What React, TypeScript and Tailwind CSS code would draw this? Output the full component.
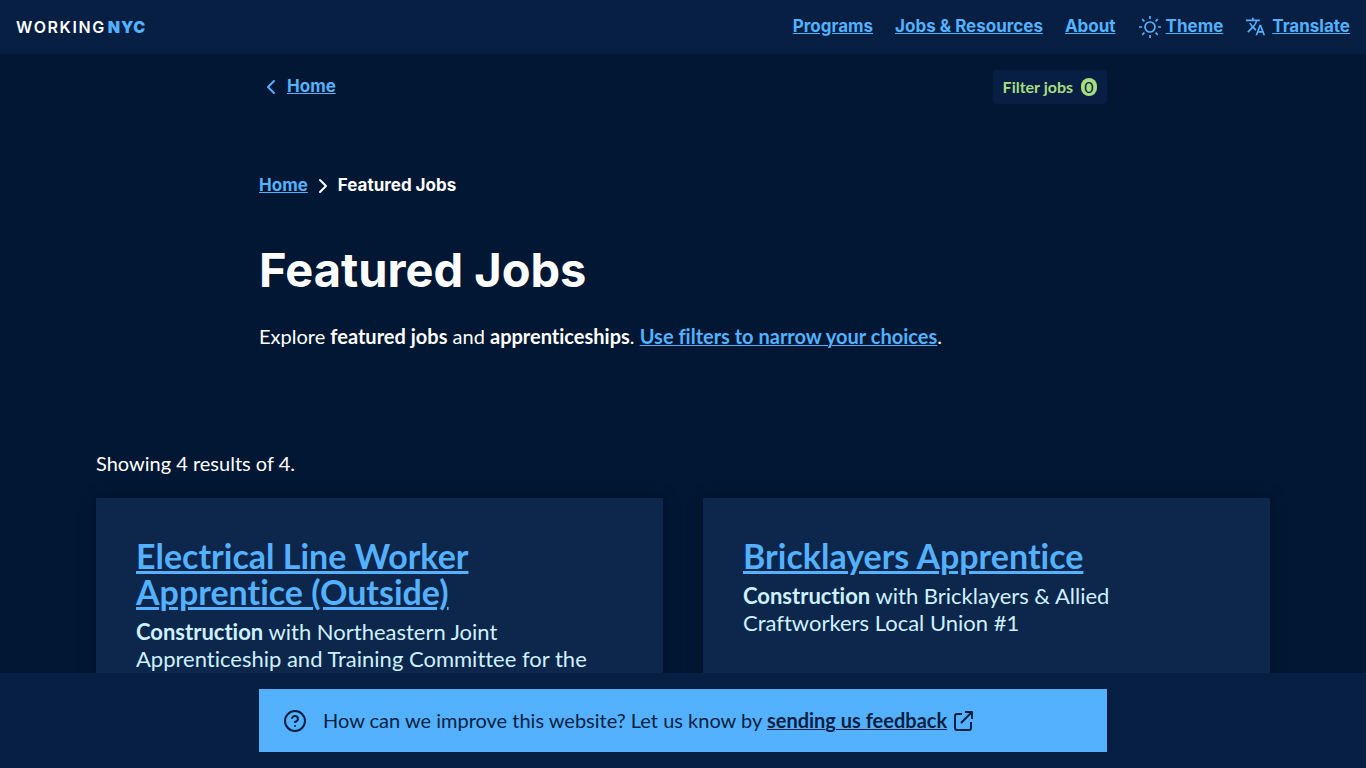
import React from "react";
import { ChevronLeft, ChevronRight, CircleHelp } from "lucide-react";
import { MdTranslate } from "react-icons/md";

const navLinks = ["Programs", "Jobs & Resources", "About"];

const jobs = [
  {
    title: "Electrical Line Worker Apprentice (Outside)",
    sector: "Construction",
    provider: "Northeastern Joint Apprenticeship and Training Committee for the",
  },
  {
    title: "Bricklayers Apprentice",
    sector: "Construction",
    provider: "Bricklayers & Allied Craftworkers Local Union #1",
  },
];

const SunIcon = () => (
  <svg
    className="size-6"
    viewBox="0 0 24 24"
    fill="none"
    stroke="currentColor"
    strokeWidth="1.7"
    aria-hidden="true"
  >
    <circle cx="12" cy="12" r="5" />
    <path d="M12 1v3M12 20v3M4.2 4.2l2.2 2.2M17.6 17.6l2.2 2.2M1 12h3M20 12h3M4.2 19.8l2.2-2.2M17.6 6.4l2.2-2.2" />
  </svg>
);

const ExternalIcon = () => (
  <svg
    className="-mt-1 ml-1 inline size-6"
    viewBox="0 0 24 24"
    fill="none"
    stroke="currentColor"
    strokeWidth="2"
    strokeLinejoin="round"
    aria-hidden="true"
  >
    <path d="M11 5H6a2 2 0 0 0-2 2v12a2 2 0 0 0 2 2h12a2 2 0 0 0 2-2v-6" />
    <path d="M14 3h7v7M21 3L10 14" />
  </svg>
);

const Header = () => (
  <header className="flex h-[54px] items-center justify-between bg-[#061f43] px-4 font-['Inter',sans-serif]">
    <a
      href="#"
      className="flex gap-[2px] text-base font-semibold tracking-widest text-white"
    >
      WORKING{" "}
      <span className="font-black tracking-wider text-[#53b1fd]">NYC</span>
    </a>
    <nav className="flex items-center gap-[22px] text-[17px] font-bold text-[#53b1fd]">
      {navLinks.map((label) => (
        <a key={label} href="#" className="underline">
          {label}
        </a>
      ))}
      <button type="button" className="flex items-center gap-1">
        <SunIcon />
        <span className="underline">Theme</span>
      </button>
      <button type="button" className="flex items-center gap-[6px]">
        <MdTranslate className="size-[21px]" />
        <span className="underline">Translate</span>
      </button>
    </nav>
  </header>
);

const App = () => {
  return (
    <div className="min-h-screen bg-[#011733] font-['Lato',sans-serif] text-xl text-white [font-variant-ligatures:none]">
      <Header />

      <main>
        <div className="mx-auto max-w-[848px]">
          <div className="flex items-center justify-between pt-4 text-base">
            <a
              href="#"
              className="flex items-center gap-1 font-['Inter',sans-serif] text-[17px] font-bold text-[#53b1fd]"
            >
              <ChevronLeft className="size-6" strokeWidth={2} />
              <span className="underline">Home</span>
            </a>
            <button
              type="button"
              className="flex h-[34px] items-center gap-2 rounded bg-[#061f43] px-[10px] font-bold text-[#a7dd80]"
            >
              Filter jobs
              <span className="flex h-[18px] w-4 items-center justify-center rounded-full bg-[#a7dd80] font-normal text-[#061f43]">
                0
              </span>
            </button>
          </div>

          <nav
            aria-label="Breadcrumb"
            className="mt-[70px] flex items-center gap-[3px] font-['Inter',sans-serif] text-[17px] font-bold"
          >
            <a href="#" className="text-[#53b1fd] underline">
              Home
            </a>
            <ChevronRight className="size-6" strokeWidth={2} />
            <span>Featured Jobs</span>
          </nav>

          <h1 className="mt-10 font-['Inter',sans-serif] text-[47px] leading-[64px] font-bold">
            Featured Jobs
          </h1>

          <p className="mt-5 leading-7">
            Explore <b>featured jobs</b> and <b>apprenticeships</b>.{" "}
            <a
              href="#"
              className="font-bold text-[#53b1fd] underline decoration-1"
            >
              Use filters to narrow your choices
            </a>
            .
          </p>
        </div>

        <section className="mx-auto mt-[99px] max-w-[1174px]">
          <p className="leading-7">Showing 4 results of 4.</p>
          <div className="mt-[21px] grid gap-10 sm:grid-cols-2">
            {jobs.map(({ title, sector, provider }) => (
              <article
                key={title}
                className="bg-[#0d264c] p-10 text-[22px] leading-[27px] text-[#cdf1ff] shadow-[0_0_16px_rgba(0,0,0,0.25)]"
              >
                <h2 className="text-[34px] leading-9 font-bold">
                  <a href="#" className="text-[#53b1fd] underline decoration-3">
                    {title}
                  </a>
                </h2>
                <p className="mt-2">
                  <b>{sector}</b> with {provider}
                </p>
              </article>
            ))}
          </div>
        </section>
      </main>

      <aside className="fixed inset-x-0 bottom-0 bg-[#061f43] py-4">
        <div className="mx-auto flex max-w-[848px] items-center gap-4 bg-[#53b1fd] px-6 py-4 text-[#061f43]">
          <CircleHelp className="size-6" strokeWidth={2} />
          <p className="leading-[31px]">
            How can we improve this website? Let us know by{" "}
            <a href="#" className="font-bold">
              <span className="underline decoration-1">
                sending us feedback
              </span>
              <ExternalIcon />
            </a>
          </p>
        </div>
      </aside>
    </div>
  );
};

export default App;
